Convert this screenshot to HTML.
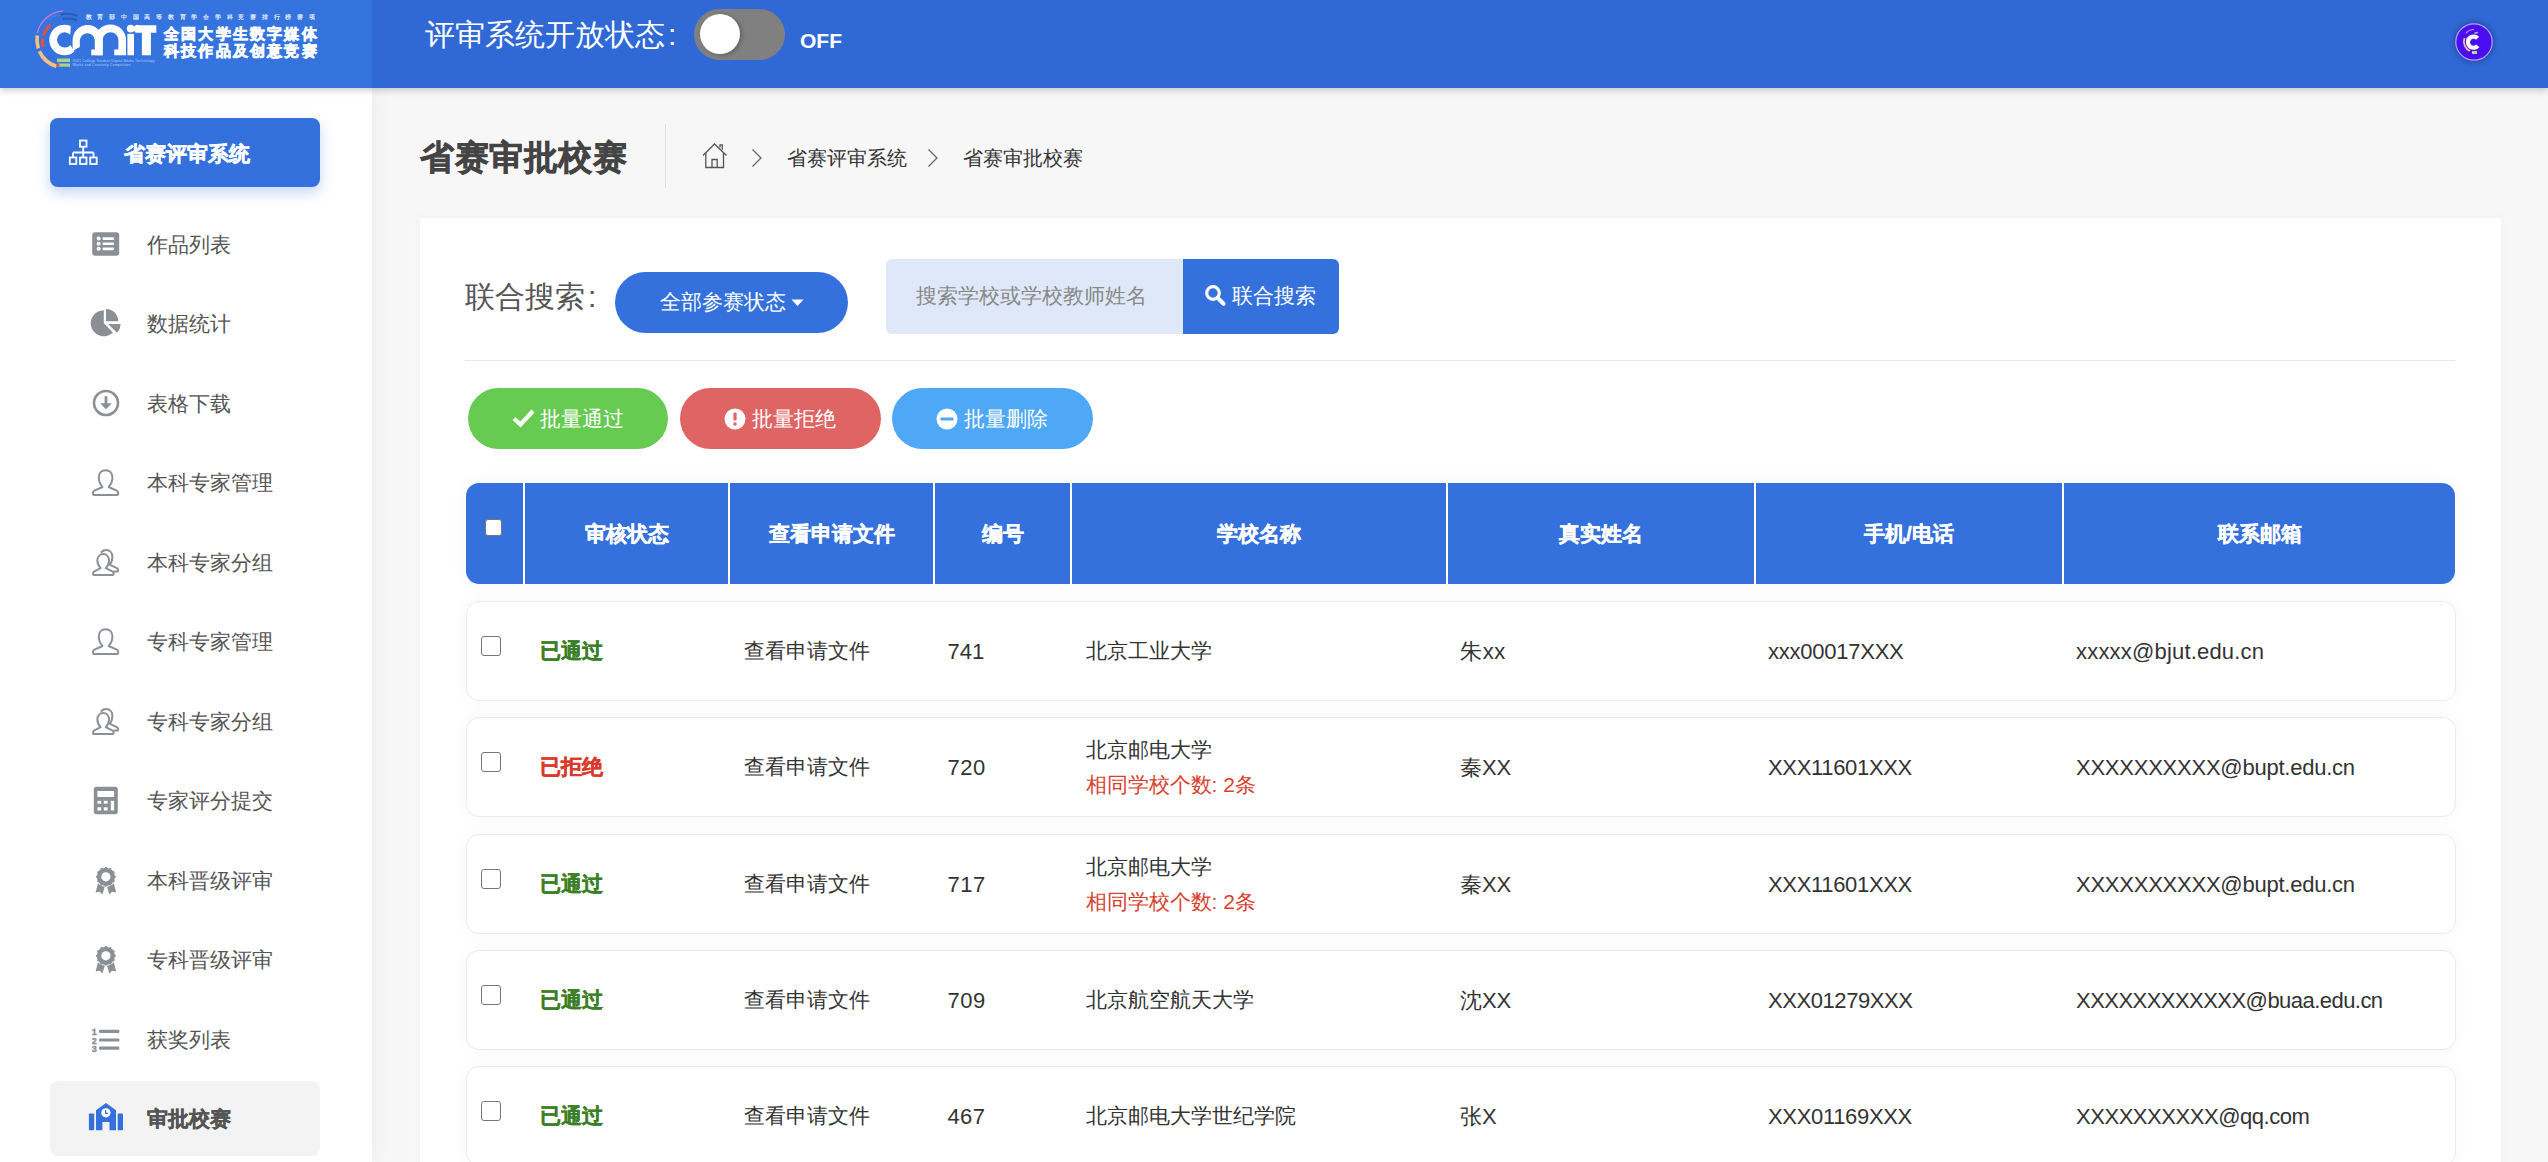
<!DOCTYPE html>
<html><head><meta charset="utf-8">
<style>
*{box-sizing:border-box;margin:0;padding:0}
html,body{width:2548px;height:1162px;overflow:hidden;background:#f7f7f7;font-family:"Liberation Sans",sans-serif;color:#333}
.abs{position:absolute}
#hdr{position:absolute;left:0;top:0;width:2548px;height:88px;background:#3068d6;box-shadow:0 2px 7px rgba(0,0,0,.22);z-index:5}
#logo{position:absolute;left:0;top:0;width:372px;height:88px;background:#3574de}
#side{position:absolute;left:0;top:88px;width:372px;height:1074px;background:#fff;z-index:2;box-shadow:0 0 22px rgba(0,0,0,.06)}
.t{position:absolute;white-space:nowrap;line-height:1}
.mi{position:absolute;left:0;width:372px;height:0}
.mi .tx{position:absolute;left:147px;top:-20px;font-size:21px;line-height:40px;color:#555;white-space:nowrap}
#card{position:absolute;left:420px;top:218px;width:2081px;height:1000px;background:#fff;box-shadow:0 0 12px rgba(0,0,0,.03)}
.btn{position:absolute;border-radius:31px;color:#fff;font-size:21px;line-height:60px;text-align:center;white-space:nowrap}
.th{position:absolute;left:466px;top:483px;width:1989px;height:101px;background:#3571dd;border-radius:13px;overflow:hidden;box-shadow:0 0 22px rgba(0,0,0,.035)}
.th .sep{position:absolute;top:0;width:2px;height:101px;background:#fff}
.th .h{position:absolute;top:0;height:101px;line-height:101px;text-align:center;color:#fff;font-weight:bold;font-size:21px;white-space:nowrap;-webkit-text-stroke:0.35px #fff}
.row{position:absolute;left:465.5px;width:1990.5px;height:100px;background:#fff;border:1px solid #ebebeb;border-radius:13px;box-shadow:0 0 18px rgba(0,0,0,.035)}
.row .c{position:absolute;top:0;height:98px;line-height:98px;font-size:21px;color:#333;white-space:nowrap}
.row .cb{position:absolute;left:14px;top:34px;width:20px;height:20px;border:1.6px solid #767676;border-radius:3px;background:#fff}
.ok{color:#3d7f27!important;font-weight:bold;-webkit-text-stroke:0.35px #3d7f27}
.no{color:#d93a2b!important;font-weight:bold;-webkit-text-stroke:0.35px #d93a2b}
.dup{color:#d9412f}
.row .c.lat{font-size:22px;top:1px}
</style></head><body>
<div id="hdr">
  <div id="logo"><svg class="abs" style="left:0;top:0" width="372" height="88" viewBox="0 0 372 88">
<g fill="none" stroke-linecap="butt">
 <path d="M 37.2 33 A 29.3 29.3 0 0 1 63 10.8" stroke="#c77be0" stroke-width="1.3"/>
 <path d="M 41 57 A 29.3 29.3 0 0 0 56 67.5" stroke="#c77be0" stroke-width="1.3"/>
 <path d="M 37.3 35.5 A 27.6 27.6 0 0 0 56.5 66.2" stroke="#f2c27e" stroke-width="3.6" stroke-dasharray="13 3 30"/>
 <path d="M 50.5 24.8 A 23 23 0 0 0 43 47" stroke="#d9524d" stroke-width="3.2" stroke-dasharray="13 3 10"/>
 <path d="M 61 14.5 A 26 26 0 0 1 77.5 16" stroke="#2a5cb8" stroke-width="2"/>
 <path d="M 63 19 A 21.5 21.5 0 0 1 77 20.5" stroke="#2a5cb8" stroke-width="2"/>
 <path d="M 47 20 A 23 23 0 0 1 60 15" stroke="#4f7fd6" stroke-width="1.2"/>
</g>
<rect x="57" y="58.5" width="13" height="3.5" fill="#a9d28a"/>
<rect x="58" y="63.5" width="12" height="3.2" fill="#a9d28a"/>
<circle cx="58" cy="65" r="1.6" fill="#d9524d"/>
<g fill="#fff">
 <path d="M 70.8 26.0 A 15.3 15.3 0 1 0 74.4 51.7 L 70.4 44.9 A 7.6 7.6 0 1 1 70.2 34.8 Z"/>
 <path d="M 72.6 51 V 40 A 15 15 0 0 1 102.6 40 V 55.3 H 91.3 V 49.6 H 94.9 V 40 A 7.6 7.6 0 0 0 79.8 40 V 47 Z"/>
 <path d="M 94.9 40 A 15.5 15.5 0 0 1 126 40 V 55.3 H 114.2 V 49.6 H 118.4 V 40 A 7.7 7.7 0 0 0 102.7 40 V 55.3 H 94.9 Z"/>
 <rect x="127.4" y="33.9" width="6.6" height="21.4"/>
 <circle cx="130.7" cy="28.6" r="3.9"/>
 <path d="M 139.5 25.2 H 156.3 V 32.7 H 150.9 V 55.3 H 141.9 V 32.7 H 135.8 A 3.8 3.8 0 0 1 139.5 25.2 Z"/>
</g>
<text x="164" y="38.6" font-family="Liberation Sans" font-size="14.6" font-weight="bold" letter-spacing="2.2" fill="#fff" stroke="#fff" stroke-width="0.7">全国大学生数字媒体</text>
<text x="164" y="56.4" font-family="Liberation Sans" font-size="14.6" font-weight="bold" letter-spacing="2.2" fill="#fff" stroke="#fff" stroke-width="0.7">科技作品及创意竞赛</text>
<text x="85.5" y="19.4" font-family="Liberation Sans" font-size="6.4" font-weight="bold" letter-spacing="5.75" fill="#fff" fill-opacity="0.85">教育部中国高等教育学会学科竞赛排行榜赛项</text>
<text x="72.5" y="62" font-family="Liberation Sans" font-size="3.6" fill="#fff" fill-opacity="0.6" textLength="82">2021 College Student Digital Media Technology</text>
<text x="72.5" y="66.3" font-family="Liberation Sans" font-size="3.6" fill="#fff" fill-opacity="0.6" textLength="58">Works and Creativity Competition</text>
</svg>
</div>
  <div class="t" style="left:425px;top:17px;font-size:30px;line-height:36px;color:#fff">评审系统开放状态<span style="margin-left:3px">:</span></div>
  <div class="abs" style="left:694px;top:9px;width:91px;height:51px;border-radius:26px;background:#808080"></div>
  <div class="abs" style="left:700px;top:14px;width:40px;height:40px;border-radius:50%;background:#fff;box-shadow:2px 1px 4px rgba(0,0,0,.25)"></div>
  <div class="t" style="left:800px;top:30px;font-size:21px;font-weight:bold;color:#fff">OFF</div>
  <svg class="abs" style="left:2450px;top:18px;filter:drop-shadow(0 0 3px rgba(0,0,40,.45))" width="48" height="48" viewBox="0 0 48 48"><circle cx="24" cy="24" r="18.2" fill="#4a0ef0" stroke="#b9a2ff" stroke-width="1.2"/>
<path d="M 14.5 20 A 10.5 10.5 0 0 0 20 33" fill="none" stroke="#f4b8a0" stroke-width="1.8"/>
<path d="M 16 15 A 11 11 0 0 1 24 11.5" fill="none" stroke="#c98cf0" stroke-width="1.2"/>
<path d="M 17.5 19 A 9 9 0 0 0 21 31" fill="none" stroke="#e07a9a" stroke-width="1.2"/>
<path d="M 24.5 15.5 A 8 8 0 0 1 28 14.5" fill="none" stroke="#9fb6ff" stroke-width="1.6"/>
<rect x="22" y="33" width="5" height="3" fill="#b8d890"/>
<path d="M 27.6 20.3 A 5.6 5.6 0 1 0 27.8 27.8" fill="none" stroke="#fff" stroke-width="4.2"/></svg>
</div>
<div id="side">
  <div class="abs" style="left:50px;top:30px;width:270px;height:69px;border-radius:8px;background:#3571dd;box-shadow:0 6px 14px rgba(53,113,221,.28)"></div>
  <svg class="abs" style="left:68px;top:51px" width="30" height="27" viewBox="0 0 30 27"><g fill="none" stroke="#fff" stroke-width="1.8"><rect x="12" y="1.5" width="6.5" height="6.2"/><path d="M15.2 7.7 V13.5 M5 13.5 H25.5 M5 13.5 V18 M15.2 13.5 V18 M25.5 13.5 V18"/><rect x="1.8" y="18.5" width="6.5" height="6.5"/><rect x="12" y="18.5" width="6.5" height="6.5"/><rect x="22.2" y="18.5" width="6.5" height="6.5"/></g></svg>
  <div class="t" style="left:124px;top:47px;font-size:21px;line-height:38px;font-weight:bold;color:#fff;-webkit-text-stroke:0.4px #fff">省赛评审系统</div>
  <div class="abs" style="left:50px;top:993px;width:270px;height:75px;border-radius:8px;background:#f3f3f3"></div>
  <svg class="abs" style="left:88px;top:1015px" width="36" height="29" viewBox="0 0 36 29"><g fill="#3571dd"><rect x="0.9" y="10.5" width="5.3" height="16.7" rx="0.8"/><rect x="29.7" y="10.5" width="5.3" height="16.7" rx="0.8"/><path d="M8 27.2 V7.2 L18 0.1 L28 7.2 V27.2 H21.5 V19 H14.4 V27.2 Z"/></g><circle cx="17.9" cy="9.8" r="4.6" fill="#fff"/><path d="M17.6 7 V10.4 H20.2" fill="none" stroke="#3571dd" stroke-width="1.2"/></svg>
  <div class="t" style="left:147px;top:1011px;font-size:21px;line-height:40px;font-weight:bold;color:#555;-webkit-text-stroke:0.35px #555">审批校赛</div>
<div class="mi" style="top:156.5px"><svg class="abs" style="left:92px;top:-13px" width="28" height="24" viewBox="0 0 28 24"><rect x="0.2" y="0.2" width="27" height="23.5" rx="3" fill="#8b9096"/><circle cx="6.6" cy="6.6" r="2" fill="#fff"/><circle cx="6.6" cy="11.7" r="2" fill="#fff"/><circle cx="6.6" cy="16.8" r="2" fill="#fff"/><rect x="10.6" y="5.3" width="11.3" height="2.7" rx="0.6" fill="#fff"/><rect x="10.6" y="10.4" width="11.3" height="2.7" rx="0.6" fill="#fff"/><rect x="10.6" y="15.5" width="11.3" height="2.7" rx="0.6" fill="#fff"/></svg><div class="tx">作品列表</div></div>
<div class="mi" style="top:236.0px"><svg class="abs" style="left:90px;top:-15px" width="32" height="28" viewBox="0 0 32 28"><path d="M13.8 1.2 L13.8 14.2 L22.9 23.4 A13 13 0 1 1 13.8 1.2 Z" fill="#8b9096"/><path d="M16 0 A12.2 12.2 0 0 1 28.2 12.2 L16 12.2 Z" fill="#8b9096"/><path d="M18.1 15 L30.5 15 A12.4 12.4 0 0 1 26.9 23.8 Z" fill="#8b9096"/></svg><div class="tx">数据统计</div></div>
<div class="mi" style="top:315.5px"><svg class="abs" style="left:92px;top:-14.5px" width="28" height="28" viewBox="0 0 28 28"><circle cx="14" cy="14" r="12" fill="none" stroke="#8b9096" stroke-width="2.6"/><rect x="12.6" y="7.2" width="2.8" height="9" fill="#8b9096"/><path d="M8 14.2 L20 14.2 L14 20.3 Z" fill="#8b9096"/></svg><div class="tx">表格下载</div></div>
<div class="mi" style="top:395.0px"><svg class="abs" style="left:92px;top:-14px" width="28" height="28" viewBox="0 0 28 28"><path d="M10.5 18 C8 15.5 6.8 12 6.8 8.6 C6.8 4.2 9.6 1.2 13.6 1.2 C17.6 1.2 20.4 4.2 20.4 8.6 C20.4 12 19.2 15.5 16.7 18 L24.8 21.7 C26 22.3 26.2 23 26.2 24 L26.2 25 C26.2 25.6 25.8 26 25.2 26 L2 26 C1.4 26 1 25.6 1 25 L1 24 C1 23 1.2 22.3 2.4 21.7 Z" fill="none" stroke="#8b9096" stroke-width="2" stroke-linejoin="round"/></svg><div class="tx">本科专家管理</div></div>
<div class="mi" style="top:474.5px"><svg class="abs" style="left:92px;top:-14px" width="28" height="28" viewBox="0 0 28 28"><path d="M9.5 3 C10.8 1.6 12.4 1 14.2 1 C17.8 1 20.4 3.8 20.4 8 C20.4 10.8 19.5 13.6 17.6 15.6 L24.8 19.2 C26 19.8 26.2 20.4 26.2 21.4 C26.2 22.2 25.6 22.6 24.6 22.6 L22.2 22.6" fill="none" stroke="#8b9096" stroke-width="2" stroke-linejoin="round" stroke-linecap="round"/><path d="M8.6 19.2 C6.6 17.2 5.4 14.4 5.4 11.6 C5.4 7.6 7.9 5 11.2 5 C14.5 5 17 7.6 17 11.6 C17 14.4 15.8 17.2 13.8 19.2 L20.2 22.4 C21.3 23 21.6 23.6 21.6 24.6 L21.6 25.2 C21.6 25.7 21.3 26 20.8 26 L1.9 26 C1.4 26 1 25.7 1 25.2 L1 24.6 C1 23.6 1.3 23 2.4 22.4 Z" fill="#fff" stroke="#8b9096" stroke-width="2" stroke-linejoin="round"/></svg><div class="tx">本科专家分组</div></div>
<div class="mi" style="top:554.0px"><svg class="abs" style="left:92px;top:-14px" width="28" height="28" viewBox="0 0 28 28"><path d="M10.5 18 C8 15.5 6.8 12 6.8 8.6 C6.8 4.2 9.6 1.2 13.6 1.2 C17.6 1.2 20.4 4.2 20.4 8.6 C20.4 12 19.2 15.5 16.7 18 L24.8 21.7 C26 22.3 26.2 23 26.2 24 L26.2 25 C26.2 25.6 25.8 26 25.2 26 L2 26 C1.4 26 1 25.6 1 25 L1 24 C1 23 1.2 22.3 2.4 21.7 Z" fill="none" stroke="#8b9096" stroke-width="2" stroke-linejoin="round"/></svg><div class="tx">专科专家管理</div></div>
<div class="mi" style="top:633.5px"><svg class="abs" style="left:92px;top:-14px" width="28" height="28" viewBox="0 0 28 28"><path d="M9.5 3 C10.8 1.6 12.4 1 14.2 1 C17.8 1 20.4 3.8 20.4 8 C20.4 10.8 19.5 13.6 17.6 15.6 L24.8 19.2 C26 19.8 26.2 20.4 26.2 21.4 C26.2 22.2 25.6 22.6 24.6 22.6 L22.2 22.6" fill="none" stroke="#8b9096" stroke-width="2" stroke-linejoin="round" stroke-linecap="round"/><path d="M8.6 19.2 C6.6 17.2 5.4 14.4 5.4 11.6 C5.4 7.6 7.9 5 11.2 5 C14.5 5 17 7.6 17 11.6 C17 14.4 15.8 17.2 13.8 19.2 L20.2 22.4 C21.3 23 21.6 23.6 21.6 24.6 L21.6 25.2 C21.6 25.7 21.3 26 20.8 26 L1.9 26 C1.4 26 1 25.7 1 25.2 L1 24.6 C1 23.6 1.3 23 2.4 22.4 Z" fill="#fff" stroke="#8b9096" stroke-width="2" stroke-linejoin="round"/></svg><div class="tx">专科专家分组</div></div>
<div class="mi" style="top:713.0px"><svg class="abs" style="left:93px;top:-15px" width="26" height="29" viewBox="0 0 26 29"><rect x="0.8" y="0.8" width="24" height="27.4" rx="2.6" fill="#8b9096"/><rect x="4.4" y="5" width="16.7" height="6" fill="#fff"/><rect x="4.4" y="14.8" width="3.8" height="2.9" fill="#fff"/><rect x="10.8" y="14.8" width="3.8" height="2.9" fill="#fff"/><rect x="4.4" y="21.3" width="3.8" height="3.2" fill="#fff"/><rect x="10.8" y="21.3" width="3.8" height="3.2" fill="#fff"/><rect x="17.8" y="14.8" width="3.3" height="9.7" fill="#fff"/></svg><div class="tx">专家评分提交</div></div>
<div class="mi" style="top:792.5px"><svg class="abs" style="left:95px;top:-14px" width="22" height="28" viewBox="0 0 22 28"><path d="M3.2 15.5 L0.6 25.4 L4.8 24.8 L7.4 27.6 L10.2 18.6 Z" fill="#8b9096"/><path d="M18.6 15.5 L21.2 25.4 L17 24.8 L14.4 27.6 L11.6 18.6 Z" fill="#8b9096"/><circle cx="10.9" cy="9.8" r="10.2" fill="#fff"/><g fill="#8b9096"><circle cx="10.9" cy="9.8" r="9.1"/><circle cx="19.80" cy="9.80" r="1.15"/><circle cx="18.61" cy="14.25" r="1.15"/><circle cx="15.35" cy="17.51" r="1.15"/><circle cx="10.90" cy="18.70" r="1.15"/><circle cx="6.45" cy="17.51" r="1.15"/><circle cx="3.19" cy="14.25" r="1.15"/><circle cx="2.00" cy="9.80" r="1.15"/><circle cx="3.19" cy="5.35" r="1.15"/><circle cx="6.45" cy="2.09" r="1.15"/><circle cx="10.90" cy="0.90" r="1.15"/><circle cx="15.35" cy="2.09" r="1.15"/><circle cx="18.61" cy="5.35" r="1.15"/></g><circle cx="10.9" cy="9.8" r="4.6" fill="#fff"/></svg><div class="tx">本科晋级评审</div></div>
<div class="mi" style="top:872.0px"><svg class="abs" style="left:95px;top:-14px" width="22" height="28" viewBox="0 0 22 28"><path d="M3.2 15.5 L0.6 25.4 L4.8 24.8 L7.4 27.6 L10.2 18.6 Z" fill="#8b9096"/><path d="M18.6 15.5 L21.2 25.4 L17 24.8 L14.4 27.6 L11.6 18.6 Z" fill="#8b9096"/><circle cx="10.9" cy="9.8" r="10.2" fill="#fff"/><g fill="#8b9096"><circle cx="10.9" cy="9.8" r="9.1"/><circle cx="19.80" cy="9.80" r="1.15"/><circle cx="18.61" cy="14.25" r="1.15"/><circle cx="15.35" cy="17.51" r="1.15"/><circle cx="10.90" cy="18.70" r="1.15"/><circle cx="6.45" cy="17.51" r="1.15"/><circle cx="3.19" cy="14.25" r="1.15"/><circle cx="2.00" cy="9.80" r="1.15"/><circle cx="3.19" cy="5.35" r="1.15"/><circle cx="6.45" cy="2.09" r="1.15"/><circle cx="10.90" cy="0.90" r="1.15"/><circle cx="15.35" cy="2.09" r="1.15"/><circle cx="18.61" cy="5.35" r="1.15"/></g><circle cx="10.9" cy="9.8" r="4.6" fill="#fff"/></svg><div class="tx">专科晋级评审</div></div>
<div class="mi" style="top:951.5px"><svg class="abs" style="left:92px;top:-12px" width="28" height="25" viewBox="0 0 28 25"><rect x="7" y="1.8" width="20.4" height="3.2" rx="1.2" fill="#8b9096"/><rect x="7" y="10.4" width="20.4" height="3.2" rx="1.2" fill="#8b9096"/><rect x="7" y="18.5" width="20.4" height="3.2" rx="1.2" fill="#8b9096"/><text x="-0.3" y="7.2" font-size="9" font-weight="bold" stroke="#8b9096" stroke-width="0.4" fill="#8b9096" font-family="Liberation Sans">1</text><text x="-0.3" y="15.6" font-size="9" font-weight="bold" stroke="#8b9096" stroke-width="0.4" fill="#8b9096" font-family="Liberation Sans">2</text><text x="-0.3" y="24" font-size="9" font-weight="bold" stroke="#8b9096" stroke-width="0.4" fill="#8b9096" font-family="Liberation Sans">3</text></svg><div class="tx">获奖列表</div></div>
</div>
<div id="main">
  <div class="t" style="left:420px;top:137px;font-size:34px;letter-spacing:0.6px;line-height:40px;font-weight:bold;color:#444;-webkit-text-stroke:0.6px #444">省赛审批校赛</div>
  <div class="abs" style="left:665px;top:124px;width:1px;height:64px;background:#e2e2e2"></div>
  <svg class="abs" style="left:702px;top:142px" width="26" height="27" viewBox="0 0 26 27"><g fill="none" stroke="#555" stroke-width="1.3"><path d="M1 13.5 L12.5 2 L24.5 13.5"/><path d="M3.8 11 V25.5 H21.5 V11"/><path d="M10 25.5 V17.5 H15.2 V25.5"/><path d="M18 5.5 V2.8 H20.3 V7.8"/></g></svg>
  <svg class="abs" style="left:751px;top:148px" width="12" height="20" viewBox="0 0 12 20"><path d="M1.5 1.5 L10 10 L1.5 18.5" fill="none" stroke="#666" stroke-width="1.3"/></svg>
  <div class="t" style="left:787px;top:145px;font-size:19.5px;line-height:26px;color:#333">省赛评审系统</div>
  <svg class="abs" style="left:927px;top:148px" width="12" height="20" viewBox="0 0 12 20"><path d="M1.5 1.5 L10 10 L1.5 18.5" fill="none" stroke="#666" stroke-width="1.3"/></svg>
  <div class="t" style="left:963px;top:145px;font-size:19.5px;line-height:26px;color:#333">省赛审批校赛</div>

  <div id="card"></div>
  <div class="t" style="left:465px;top:279px;font-size:30px;line-height:36px;color:#555">联合搜索<span style="margin-left:3px">:</span></div>
  <div class="btn" style="left:615px;top:272px;width:233px;height:61px;background:#3571dd;text-align:left;padding-left:45px">全部参赛状态<svg style="position:absolute;left:176px;top:27px" width="13" height="8" viewBox="0 0 13 8"><path d="M0.5 0.5 H12.5 L6.5 7 Z" fill="#fff"/></svg></div>
  <div class="abs" style="left:886px;top:259px;width:297px;height:75px;background:#dfe8f8;border-radius:6px 0 0 6px"></div>
  <div class="t" style="left:916px;top:282px;font-size:21px;line-height:28px;color:#888">搜索学校或学校教师姓名</div>
  <div class="abs" style="left:1183px;top:259px;width:156px;height:75px;background:#3571dd;border-radius:0 6px 6px 0"></div>
  <svg class="abs" style="left:1204px;top:284px" width="24" height="23" viewBox="0 0 24 23"><circle cx="9" cy="9" r="6.3" fill="none" stroke="#fff" stroke-width="3.2"/><path d="M13.5 13.8 L19.6 19.8" stroke="#fff" stroke-width="4" stroke-linecap="round"/></svg>
  <div class="t" style="left:1232px;top:282px;font-size:21px;line-height:28px;color:#fff">联合搜索</div>
  <div class="abs" style="left:465px;top:360px;width:1990px;height:1px;background:#e6e6e6"></div>

  <div class="btn" style="left:468px;top:388px;width:200px;height:61px;background:#67cb52"></div>
  <svg class="abs" style="left:512px;top:408px" width="23" height="20" viewBox="0 0 23 20"><path d="M2 10.5 L8.5 16.5 L21 3" fill="none" stroke="#fff" stroke-width="4.2" stroke-linejoin="miter"/></svg>
  <div class="t" style="left:540px;top:405px;font-size:21px;line-height:28px;color:#fff">批量通过</div>
  <div class="btn" style="left:680px;top:388px;width:201px;height:61px;background:#df6464"></div>
  <svg class="abs" style="left:724px;top:408px" width="22" height="22" viewBox="0 0 22 22"><circle cx="11" cy="11" r="10.5" fill="#fff"/><rect x="9.4" y="4.6" width="3.2" height="8" rx="1" fill="#df6464"/><circle cx="11" cy="16" r="1.8" fill="#df6464"/></svg>
  <div class="t" style="left:752px;top:405px;font-size:21px;line-height:28px;color:#fff">批量拒绝</div>
  <div class="btn" style="left:892px;top:388px;width:201px;height:61px;background:#4fa8f6"></div>
  <svg class="abs" style="left:936px;top:408px" width="22" height="22" viewBox="0 0 22 22"><circle cx="11" cy="11" r="10.5" fill="#fff"/><rect x="4.5" y="9.4" width="13" height="3.2" rx="0.8" fill="#4fa8f6"/></svg>
  <div class="t" style="left:964px;top:405px;font-size:21px;line-height:28px;color:#fff">批量删除</div>

  <div class="th">
    <div class="abs" style="left:19px;top:36px;width:17px;height:17px;background:#fff;border:1.6px solid #767676;border-radius:3px"></div>
    <div class="sep" style="left:57px"></div>
    <div class="h" style="left:59px;width:203px">审核状态</div>
    <div class="sep" style="left:262px"></div>
    <div class="h" style="left:264px;width:203px">查看申请文件</div>
    <div class="sep" style="left:467px"></div>
    <div class="h" style="left:469px;width:135px">编号</div>
    <div class="sep" style="left:604px"></div>
    <div class="h" style="left:606px;width:374px">学校名称</div>
    <div class="sep" style="left:980px"></div>
    <div class="h" style="left:982px;width:306px">真实姓名</div>
    <div class="sep" style="left:1288px"></div>
    <div class="h" style="left:1290px;width:306px">手机/电话</div>
    <div class="sep" style="left:1596px"></div>
    <div class="h" style="left:1598px;width:391px">联系邮箱</div>
  </div>
  <div class="row" style="top:601.00px"><div class="cb"></div><div class="c ok" style="left:73px">已通过</div><div class="c" style="left:277px">查看申请文件</div><div class="c lat" id="L1" style="left:481px;letter-spacing:0.00px">741</div><div class="c" style="left:619px">北京工业大学</div><div class="c lat" id="L2" style="left:993.5px;letter-spacing:0.65px">朱xx</div><div class="c lat" id="L3" style="left:1301.5px;letter-spacing:-0.24px">xxx00017XXX</div><div class="c lat" id="L4" style="left:1609.5px;letter-spacing:0.19px">xxxxx@bjut.edu.cn</div></div>
  <div class="row" style="top:717.25px"><div class="cb"></div><div class="c no" style="left:73px">已拒绝</div><div class="c" style="left:277px">查看申请文件</div><div class="c lat" id="L5" style="left:481px;letter-spacing:0.50px">720</div><div class="c" style="left:619px;line-height:35px;top:14px">北京邮电大学<br><span class="dup">相同学校个数: 2条</span></div><div class="c lat" id="L6" style="left:993.5px;letter-spacing:-0.10px">秦XX</div><div class="c lat" id="L7" style="left:1301.5px;letter-spacing:-0.33px">XXX11601XXX</div><div class="c lat" id="L8" style="left:1609.5px;letter-spacing:-0.24px">XXXXXXXXXX@bupt.edu.cn</div></div>
  <div class="row" style="top:833.50px"><div class="cb"></div><div class="c ok" style="left:73px">已通过</div><div class="c" style="left:277px">查看申请文件</div><div class="c lat" id="L9" style="left:481px;letter-spacing:0.50px">717</div><div class="c" style="left:619px;line-height:35px;top:14px">北京邮电大学<br><span class="dup">相同学校个数: 2条</span></div><div class="c lat" id="L10" style="left:993.5px;letter-spacing:-0.10px">秦XX</div><div class="c lat" id="L11" style="left:1301.5px;letter-spacing:-0.33px">XXX11601XXX</div><div class="c lat" id="L12" style="left:1609.5px;letter-spacing:-0.24px">XXXXXXXXXX@bupt.edu.cn</div></div>
  <div class="row" style="top:949.75px"><div class="cb"></div><div class="c ok" style="left:73px">已通过</div><div class="c" style="left:277px">查看申请文件</div><div class="c lat" id="L13" style="left:481px;letter-spacing:0.50px">709</div><div class="c" style="left:619px">北京航空航天大学</div><div class="c lat" id="L14" style="left:993.5px;letter-spacing:-0.10px">沈XX</div><div class="c lat" id="L15" style="left:1301.5px;letter-spacing:-0.43px">XXX01279XXX</div><div class="c lat" id="L16" style="left:1609.5px;letter-spacing:-0.54px">XXXXXXXXXXXX@buaa.edu.cn</div></div>
  <div class="row" style="top:1066.00px"><div class="cb"></div><div class="c ok" style="left:73px">已通过</div><div class="c" style="left:277px">查看申请文件</div><div class="c lat" id="L17" style="left:481px;letter-spacing:0.35px">467</div><div class="c" style="left:619px">北京邮电大学世纪学院</div><div class="c lat" id="L18" style="left:993.5px;letter-spacing:0.10px">张X</div><div class="c lat" id="L19" style="left:1301.5px;letter-spacing:-0.33px">XXX01169XXX</div><div class="c lat" id="L20" style="left:1609.5px;letter-spacing:-0.46px">XXXXXXXXXX@qq.com</div></div>
</div>
</body></html>
